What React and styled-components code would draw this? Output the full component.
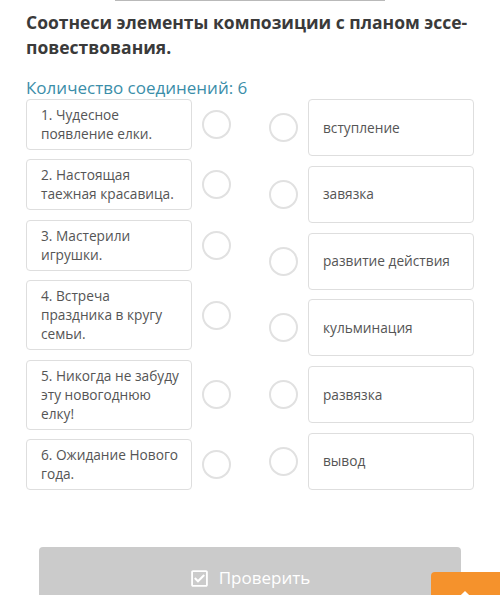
import React from "react";
import styled, { createGlobalStyle } from "styled-components";
import { FaRegCheckSquare } from "react-icons/fa";

const GlobalStyle = createGlobalStyle`
  body {
    margin: 0;
    background: #fff;
    font-family: "Open Sans", "Noto Sans", sans-serif;
  }
`;

const Page = styled.div`
  position: relative;
  width: 500px;
  height: 595px;
  overflow: hidden;
  background: #fff;
`;

const TopLine = styled.div`
  height: 1px;
  margin: 0 115px;
  background: #b9b9b9;
`;

const Content = styled.div`
  padding: 9px 25px 0 26px;
`;

const Title = styled.h1`
  margin: 0;
  font-size: 17.5px;
  line-height: 25px;
  font-weight: 700;
  color: #3a3a3a;
`;

const Counter = styled.div`
  margin-top: 18px;
  font-size: 17px;
  line-height: 20px;
  color: #3b8ea9;
`;

const Board = styled.div`
  display: flex;
  gap: 38px;
  margin-top: 1px;
`;

const LeftColumn = styled.div`
  display: flex;
  flex-direction: column;
  gap: 9.4px;
`;

const RightColumn = styled.div`
  display: flex;
  flex-direction: column;
  justify-content: space-between;
`;

const Row = styled.div`
  display: flex;
  align-items: center;
  gap: 10px;
`;

const Card = styled.div`
  box-sizing: border-box;
  width: 166px;
  min-height: ${({ right }) => (right ? "57px" : "50px")};
  padding: 5px 10px 6px 14px;
  display: flex;
  align-items: ${({ right }) => (right ? "center" : "flex-start")};
  border: 1px solid #dedede;
  border-radius: 4px;
  font-size: 13.7px;
  line-height: 19px;
  color: #555;
`;

const Dot = styled.span`
  box-sizing: border-box;
  width: 29px;
  height: 29px;
  flex: none;
  border: 2.5px solid #e1e1e1;
  border-radius: 50%;
`;

const CheckButton = styled.div`
  margin: 57px 39px 0 39px;
  height: 60px;
  border-radius: 4px;
  background: #cbcbcb;
  display: flex;
  justify-content: center;
  gap: 10px;
  padding-top: 20px;
  box-sizing: border-box;
  color: #fff;
  font-size: 17px;
  line-height: 22px;

  svg {
    margin-top: 2px;
    font-size: 19px;
  }
`;

const UpTab = styled.div`
  position: absolute;
  left: 431px;
  top: 572px;
  width: 80px;
  height: 40px;
  background: #f5922c;
  border-radius: 4px;
  display: flex;
  justify-content: center;

  svg {
    margin-top: 18px;
    margin-right: 12px;
  }
`;

const left = [
  "1. Чудесное появление елки.",
  "2. Настоящая таежная красавица.",
  "3. Мастерили игрушки.",
  "4. Встреча праздника в кругу семьи.",
  "5. Никогда не забуду эту новогоднюю елку!",
  "6. Ожидание Нового года.",
];

const right = [
  "вступление",
  "завязка",
  "развитие действия",
  "кульминация",
  "развязка",
  "вывод",
];

export default function App() {
  return (
    <Page>
      <GlobalStyle />
      <TopLine />
      <Content>
        <Title>Соотнеси элементы композиции с планом эссе-повествования.</Title>
        <Counter>Количество соединений: 6</Counter>
        <Board>
          <LeftColumn>
            {left.map((t) => (
              <Row key={t}>
                <Card>{t}</Card>
                <Dot />
              </Row>
            ))}
          </LeftColumn>
          <RightColumn>
            {right.map((t) => (
              <Row key={t}>
                <Dot />
                <Card right>{t}</Card>
              </Row>
            ))}
          </RightColumn>
        </Board>
      </Content>
      <CheckButton>
        <FaRegCheckSquare />
        Проверить
      </CheckButton>
      <UpTab>
        <svg width="14" height="10" viewBox="0 0 14 10">
          <path d="M2 8 L7 3 L12 8" fill="none" stroke="#fff" strokeWidth="3" />
        </svg>
      </UpTab>
    </Page>
  );
}
